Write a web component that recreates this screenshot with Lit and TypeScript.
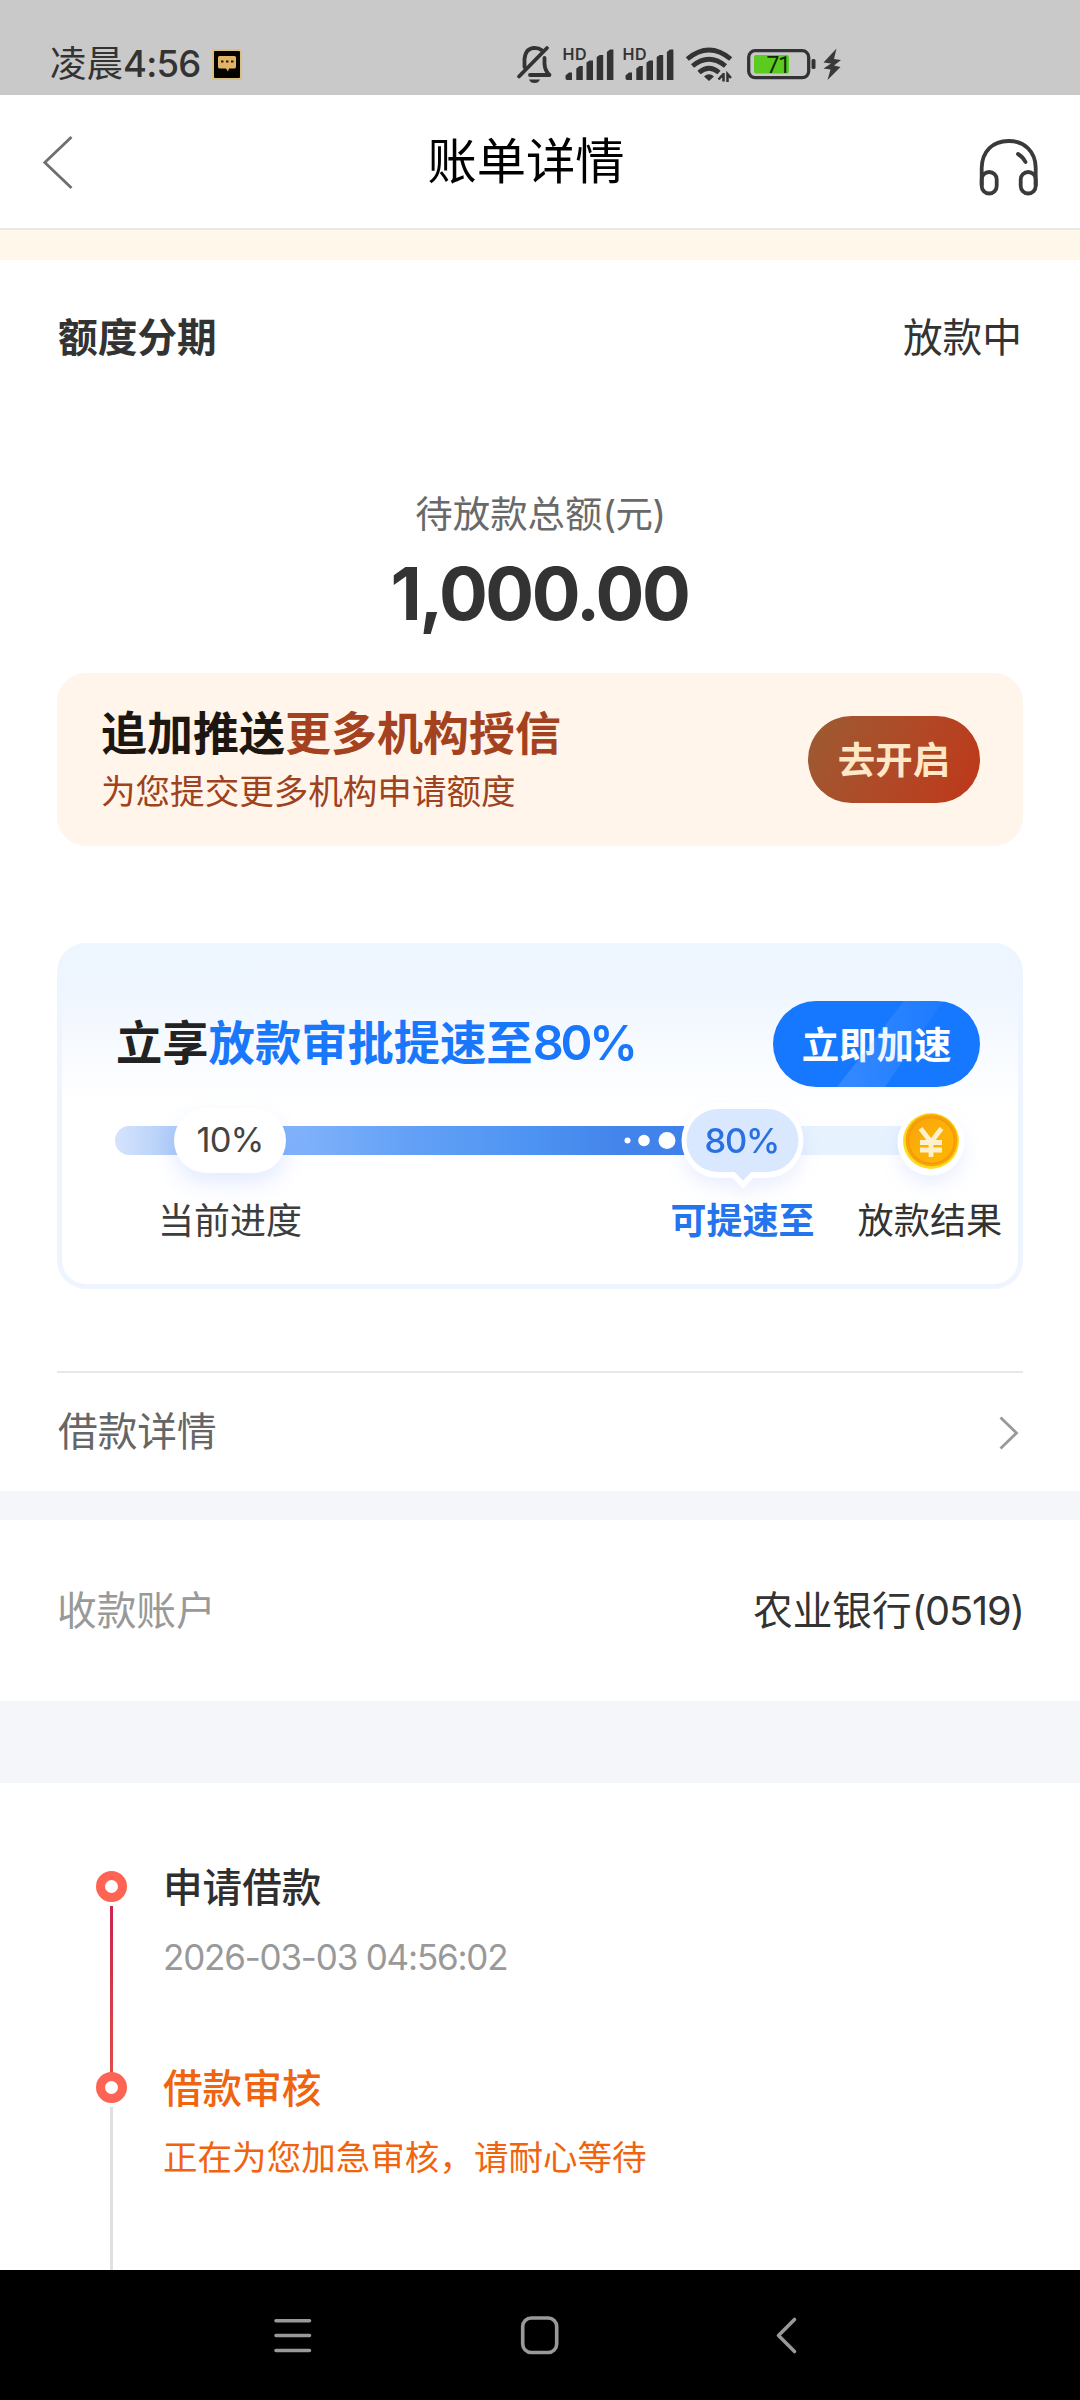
import { LitElement, html, css, svg } from "lit";
import { customElement, property } from "lit/decorators.js";

const signalBars = () => svg`
  <path fill="#333" d="M0 31V28.500L3.500 25.500H6.500V33H1.500Q0 33 0 31z"/>
  <path fill="#333" d="M10.800 33V21.500L14 19H17.300V33z"/>
  <path fill="#333" d="M21 33V15.500L24 13.500H27.500V33z"/>
  <path fill="#333" d="M31.200 33V10L34.200 8H37.700V33z"/>
  <path fill="#333" d="M41.400 33V5L44.400 2.500H47.900V33z"/>`;

@customElement("status-bar")
export class StatusBar extends LitElement {
  static styles = css`
    :host { display: flex; align-items: flex-start; height: 95px; background: #c9c9c9; color: #333; box-sizing: border-box; padding: 44px 0 0 50px; }
    .time { width: 162px; font-size: 36.5px; line-height: 40px; white-space: nowrap; }
    .digits { letter-spacing: -0.8px; font-weight: 450; }
    .app { display: block; margin-top: 5px; }
    .icons { display: block; margin: 0 0 0 274px; }
    .hd { font: 600 16px Inter, "Liberation Sans", sans-serif; }
    .level { font: 400 23px Roboto, "Liberation Sans", sans-serif; letter-spacing: -1.5px; }
  `;
  render() {
    return html`
      <div class="time">凌晨<span class="digits">4:56</span></div>
      <svg class="app" width="30" height="31" viewBox="0 0 30 31">
        <rect width="30" height="31" rx="2" fill="#dcbf83"/>
        <rect x="2" y="2" width="26" height="27" rx="1" fill="#050300"/>
        <path d="M6 8.500q0-1.500 1.500-1.500h15q1.500 0 1.500 1.500v9q0 2-1.500 2h-5.500l-1 3-2-3h-6.500q-1.500 0-1.500-2z" fill="#e0b569"/>
        <path d="M9 12.500h2.500M14 12.500h2.500M19 12.500h2.500" stroke="#2b1b00" stroke-width="2.200"/>
      </svg>
      <svg class="icons" width="330" height="44" viewBox="516 44 330 44">
        <g fill="none" stroke="#333" stroke-width="3.800" stroke-linecap="round" stroke-linejoin="round">
          <path d="M519 76.500L547 48"/>
          <path d="M524.500 67V59Q525.500 48 534.500 47.800Q539 48 541.500 50"/>
          <path d="M544.500 58V64Q545 71 549.500 75H530"/>
        </g>
        <path d="M529 79.500h11q-1.500 3.500-5.500 3.500t-5.500-3.500z" fill="#333"/>
        <text class="hd" x="562.500" y="60" fill="#333" textLength="24">HD</text>
        <g transform="translate(565.500 47)">${signalBars()}</g>
        <text class="hd" x="622.500" y="60" fill="#333" textLength="24">HD</text>
        <g transform="translate(625.500 47)">${signalBars()}</g>
        <g fill="none" stroke="#333" stroke-width="4.800">
          <path d="M687.300 59Q709 41 730.700 59"/>
          <path d="M692.500 66Q709 52.500 725.500 66"/>
          <path d="M699 72.500Q709 64 719 72.500"/>
        </g>
        <path d="M704 76.500q5-4.500 10 0l-5 4.500z" fill="#333"/>
        <path d="M718.500 79.500l4-4.500M723.500 73v8.500M727.500 82v-8l3.500 4" fill="none" stroke="#333" stroke-width="2.500"/>
        <rect x="754" y="55" width="35" height="18.500" rx="2" fill="#5bcb1f"/>
        <rect x="748.700" y="50.700" width="60" height="27" rx="6.500" fill="none" stroke="#333" stroke-width="3.300"/>
        <rect x="811.500" y="59" width="4" height="10" rx="1.500" fill="#333"/>
        <text class="level" x="766.500" y="73" fill="#12280a">71</text>
        <path d="M836.500 48.500L823.500 62.500L831 63.500L823.500 68.500L830.500 69.500L827.500 80L840.500 67L834 65.500L841 60L834 59z" fill="#3a3a3a"/>
      </svg>`;
  }
}

@customElement("nav-header")
export class NavHeader extends LitElement {
  static styles = css`
    :host { display: flex; align-items: center; height: 133px; background: #fff; border-bottom: 2px solid #e8e8e4; padding: 0 42px 0 42px; }
    .back { flex: none; }
    .title { flex: 1; text-align: center; font-size: 49.3px; line-height: 60px; color: #000; margin: 0 0 2px; font-weight: 400; }
    .service { flex: none; margin-top: 10px; }
  `;
  render() {
    return html`
      <svg class="back" width="32" height="56" viewBox="42 134 32 56"><path d="M71.500 137L44.800 162.500L71.500 188" fill="none" stroke="#6f6f6f" stroke-width="2.800"/></svg>
      <h1 class="title">账单详情</h1>
      <svg class="service" width="60" height="60" viewBox="978 136 60 60" fill="none" stroke="#3a3a3a" stroke-width="3.800" stroke-linecap="round">
        <path d="M981.700 184V167C982 150 993 140 1008.500 140S1035.500 150 1035.700 167V184"/>
        <rect x="981.700" y="171" width="15" height="21.500" rx="7.500"/>
        <rect x="1020.700" y="171" width="15" height="21.500" rx="7.500"/>
        <path d="M1018 153Q1023 156 1025.500 161"/>
      </svg>`;
  }
}

@customElement("push-banner")
export class PushBanner extends LitElement {
  static styles = css`
    :host { display: flex; align-items: center; justify-content: space-between; height: 173px; box-sizing: border-box; border-radius: 29px; background: #fff5ea; padding: 0 43px 0 44px; }
    .title { font-size: 46px; line-height: 60px; font-weight: 600; color: #1d1611; }
    .accent { color: #a4421f; }
    .sub { font-size: 34.56px; line-height: 50px; color: #9f4220; margin-top: 4px; }
    .btn { width: 172px; height: 87px; border: 0; border-radius: 44px; padding: 0 0 3px; font: inherit; font-size: 37.44px; font-weight: 600; color: #ffe8c8; background: linear-gradient(118deg, #9e5931 8%, #b14826 55%, #bf3719 100%); }
  `;
  render() {
    return html`
      <div>
        <div class="title">追加推送<span class="accent">更多机构授信</span></div>
        <div class="sub">为您提交更多机构申请额度</div>
      </div>
      <button class="btn">去开启</button>`;
  }
}

@customElement("speed-card")
export class SpeedCard extends LitElement {
  static styles = css`
    :host { display: block; height: 346px; box-sizing: border-box; border-radius: 29px; background: linear-gradient(180deg, #eef6ff 0, #eff6ff 48px, #fff 160px) padding-box, #eff5ff border-box; border: 5px solid transparent; border-top-width: 0; padding: 58px 38px 0 53px; }
    .head { display: flex; align-items: center; justify-content: space-between; }
    .title { font-size: 46.3px; line-height: 60px; font-weight: 600; color: #222; white-space: nowrap; padding-bottom: 2px; margin-left: 1px; }
    .accent { color: #1977fb; }
    .pct { font-size: 48.5px; letter-spacing: -3.2px; margin-left: 0; }
    .btn { width: 207px; height: 86px; border: 0; border-radius: 43px; padding: 0 0 3px; font: inherit; font-size: 37.44px; font-weight: 600; color: #fff; background: #1677ff; position: relative; overflow: hidden; }
    .shine { position: absolute; inset: 0; width: 207px; height: 86px; }
    .track { position: relative; height: 29px; margin-top: 39px; border-radius: 15px 0 0 15px; width: 800px; background: #e7f2ff; }
    .fill { height: 29px; border-radius: 15px 0 0 15px; background: linear-gradient(90deg, #d5e4fd 0, #b4cff8 9%, #84b4fb 29%, #62a0f6 52%, #4c92f2 74%, #4384ea 88%, #3f82ea 100%); }
    .pill { position: absolute; left: 59px; top: -18px; width: 112px; height: 65px; border-radius: 33px; background: #fff; box-shadow: 0 10px 22px rgba(60, 110, 255, 0.14); text-align: center; font-size: 34.5px; line-height: 63px; color: #444; letter-spacing: -0.9px; }
    .overlay { position: absolute; left: 500px; top: -40px; overflow: visible; filter: drop-shadow(0 9px 9px rgba(60, 110, 255, 0.1)); }
    .dots { position: absolute; left: 500px; top: 0; }
    .pct80 { font: 500 34.5px Inter, "Liberation Sans", sans-serif; letter-spacing: -1.2px; }
    .labels { display: flex; margin: 40px -38px 0 43px; font-size: 36px; line-height: 52px; color: #3d3d3d; white-space: nowrap; }
    .target { margin-left: 368.5px; font-weight: 600; color: #2474ee; }
    .result { margin-left: 43px; color: #333; font-size: 36.2px; }
  `;
  @property({ type: Number }) target = 80;
  render() {
    return html`
      <div class="head">
        <div class="title">立享<span class="accent">放款审批提速至<span class="pct">${this.target}%</span></span></div>
        <button class="btn">立即加速
          <svg class="shine" viewBox="0 0 207 86">
            <defs><linearGradient id="sh" x1="0" y1="0.500" x2="1" y2="0.500"><stop offset="0.100" stop-color="#8fc0ff" stop-opacity="0.240"/><stop offset="1" stop-color="#8fc0ff" stop-opacity="0.060"/></linearGradient></defs>
            <path d="M131 0H170L112 86H64z" fill="url(#sh)"/>
          </svg>
        </button>
      </div>
      <div class="track">
        <div class="fill" style="width:${this.target * 0.9}%"></div>
        <div class="pill">10%</div>
        <svg class="dots" width="70" height="29" fill="#fff"><circle cx="12.500" cy="14.500" r="3"/><circle cx="29" cy="14.500" r="5.800"/><circle cx="52" cy="14.500" r="8.500"/></svg>
        <svg class="overlay" width="370" height="120" viewBox="615 1086 370 120">
          <defs>
            <linearGradient id="coin" x1="0" y1="0" x2="1" y2="1"><stop offset="0" stop-color="#f9a20a"/><stop offset="0.500" stop-color="#fdb108"/><stop offset="1" stop-color="#ffb400"/></linearGradient>
          </defs>
          <path d="M718 1103H767A36.500 37.500 0 0 1 767 1178H753L743 1189L733 1178H718A36.500 37.500 0 0 1 718 1103z" fill="#fff"/>
          <path d="M718 1109H767A31.500 31.500 0 0 1 767 1172H751.500L743 1180.500L734.500 1172H718A31.500 31.500 0 0 1 718 1109z" fill="#d9e8fe"/>
          <text class="pct80" x="704.500" y="1152.600" fill="#2a70e0">${this.target}%</text>
          <circle cx="931" cy="1142" r="33.500" fill="#fff"/>
          <circle cx="931" cy="1141" r="28" fill="#fcdc1e"/>
          <circle cx="931.500" cy="1140.300" r="26" fill="#f9a30c"/>
          <circle cx="931.500" cy="1140.500" r="23" fill="url(#coin)" stroke="#f39a08" stroke-width="1.500"/>
          <path d="M920.500 1128.500L931 1142L941.500 1128.500M931 1141V1157M920 1142.500H942M920 1150H942" fill="none" stroke="#fff1cc" stroke-width="4.800"/>
        </svg>
      </div>
      <div class="labels"><span>当前进度</span><span class="target">可提速至</span><span class="result">放款结果</span></div>`;
  }
}

interface Step { title: string; note: string; active: boolean; }

@customElement("loan-timeline")
export class LoanTimeline extends LitElement {
  static styles = css`
    :host { display: block; box-sizing: border-box; height: 487px; padding: 81px 0 0 95px; background: #fff; overflow: hidden; }
    .step { display: grid; grid-template-columns: 32px 1fr; column-gap: 36px; height: 201px; }
    .rail { display: flex; flex-direction: column; align-items: center; padding-top: 7px; }
    .dot { flex: none; width: 31px; height: 31px; box-sizing: border-box; border: 9px solid #fd6453; border-radius: 50%; }
    .line { width: 3px; flex: 1; margin: 4px 0 -8px; background: linear-gradient(180deg, #c9244f, #e04c46); }
    .line.idle { background: #e0e0e0; }
    .title { font-size: 39.6px; line-height: 48px; font-weight: 500; color: #2f2f2f; }
    .note { font-size: 34.56px; line-height: 48px; margin-top: 21px; color: #999; white-space: nowrap; }
    .active .title, .active .note { color: #f1640f; }
    .plain .note { font-size: 35px; letter-spacing: -1.2px; }
  `;
  private steps: Step[] = [
    { title: "申请借款", note: "2026-03-03 04:56:02", active: false },
    { title: "借款审核", note: "正在为您加急审核，请耐心等待", active: true },
  ];
  render() {
    return this.steps.map((s) => html`
      <div class="step ${s.active ? "active" : "plain"}">
        <div class="rail"><i class="dot"></i><i class="line ${s.active ? "idle" : ""}"></i></div>
        <div><div class="title">${s.title}</div><div class="note">${s.note}</div></div>
      </div>`);
  }
}

@customElement("app-root")
export class AppRoot extends LitElement {
  static styles = css`
    :host { display: flex; flex-direction: column; width: 1080px; height: 2400px; overflow: hidden; background: #fff; color: #333; font-family: Inter, "Noto Sans CJK SC", sans-serif; }
    .notice { height: 30px; background: #fff8ea; }
    .summary { display: flex; flex-direction: column; height: 1231px; padding: 0 57px; box-sizing: border-box; }
    .row { display: flex; justify-content: space-between; align-items: center; font-size: 39.7px; line-height: 60px; }
    .product { margin-top: 48px; padding: 0 1px; }
    .name { font-weight: 600; }
    .label { text-align: center; font-size: 37.44px; line-height: 50px; margin-top: 122px; color: #696969; padding-left: 1px; }
    .paren { letter-spacing: -0.5px; }
    .amount { text-align: center; font-size: 72.5px; line-height: 84px; font-weight: 650; margin-top: 12px; color: #333; letter-spacing: -2.5px; padding-right: 1px; }
    push-banner { margin-top: 37px; }
    speed-card { margin-top: 97px; }
    .detail { margin-top: 82px; border-top: 2px solid #e8e8e8; padding-top: 29px; color: #666; }
    .detail .text { padding-left: 1px; }
    .gap { height: 29px; background: #f5f6f9; }
    .account { height: 181px; padding: 0 56px 0 57px; }
    .muted { color: #999; }
    .num { letter-spacing: -1.1px; }
    .gap.tall { height: 82px; }
    .nav { height: 130px; background: #000; }
    svg { display: block; }
  `;
  render() {
    return html`
      <status-bar></status-bar>
      <nav-header></nav-header>
      <div class="notice"></div>
      <section class="summary">
        <div class="row product"><span class="name">额度分期</span><span>放款中</span></div>
        <div class="label">待放款总额<span class="paren">(元)</span></div>
        <div class="amount">1,000.00</div>
        <push-banner></push-banner>
        <speed-card></speed-card>
        <div class="row detail"><span class="text">借款详情</span>
          <svg width="25" height="38" viewBox="998 1413 25 38"><path d="M1000.500 1417.500L1016.500 1433L1000.500 1448.500" fill="none" stroke="#999" stroke-width="2.800"/></svg>
        </div>
      </section>
      <div class="gap"></div>
      <div class="row account"><span class="muted">收款账户</span><span>农业银行<span class="num">(0519)</span></span></div>
      <div class="gap tall"></div>
      <loan-timeline></loan-timeline>
      <svg class="nav" width="1080" height="130" viewBox="0 2270 1080 130" fill="none" stroke="#999" stroke-width="3.600" stroke-linecap="round">
        <path d="M276 2320.700H309.500M276 2335.500H309.500M276 2350.500H309.500"/>
        <rect x="522.700" y="2318" width="34" height="34.500" rx="8.500"/>
        <path d="M794.500 2319.500L778.500 2335.500L794.500 2351.500" stroke-linejoin="round"/>
      </svg>`;
  }
}
